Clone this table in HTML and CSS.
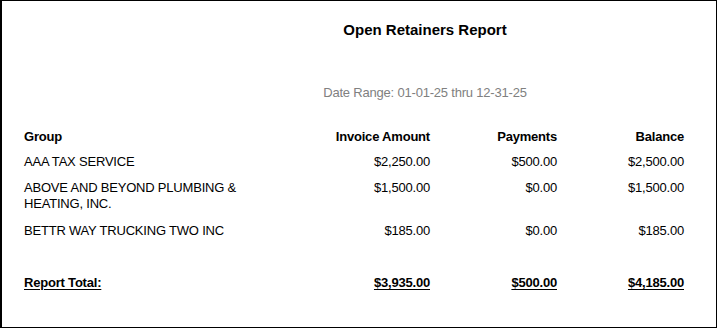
FILE: index.html
```html
<!DOCTYPE html>
<html>
<head>
<meta charset="utf-8">
<link rel="stylesheet" href="styles.css">
</head>
<body>
<div class="frame">
  <div class="head">
    <div class="title">Open Retainers Report</div>
    <div class="range">Date Range: 01-01-25 thru 12-31-25</div>
  </div>
  <div class="report">
    <div class="row hdr">
      <div class="c-group">Group</div>
      <div class="num">Invoice Amount</div>
      <div class="num">Payments</div>
      <div class="num">Balance</div>
    </div>
    <div class="row">
      <div class="c-group">AAA TAX SERVICE</div>
      <div class="num">$2,250.00</div>
      <div class="num">$500.00</div>
      <div class="num">$2,500.00</div>
    </div>
    <div class="row">
      <div class="c-group">ABOVE AND BEYOND PLUMBING &amp; HEATING, INC.</div>
      <div class="num">$1,500.00</div>
      <div class="num">$0.00</div>
      <div class="num">$1,500.00</div>
    </div>
    <div class="row after-wrap">
      <div class="c-group">BETTR WAY TRUCKING TWO INC</div>
      <div class="num">$185.00</div>
      <div class="num">$0.00</div>
      <div class="num">$185.00</div>
    </div>
    <div class="row total">
      <div class="c-group"><span class="u">Report Total:</span></div>
      <div class="num"><span class="u">$3,935.00</span></div>
      <div class="num"><span class="u">$500.00</span></div>
      <div class="num"><span class="u">$4,185.00</span></div>
    </div>
  </div>
</div>
</body>
</html>
```
FILE: styles.css
```css
html, body {
  margin: 0;
  padding: 0;
  background: #fff;
}
body {
  font-family: "Liberation Sans", Arial, sans-serif;
  color: #000;
}
.frame {
  width: 717px;
  height: 328px;
  box-sizing: border-box;
  border: 1px solid #000;
  border-left-width: 2px;
  padding-top: 20px;
}
.head {
  padding-left: 132px;
  text-align: center;
}
.title {
  font-weight: bold;
  font-size: 15px;
  line-height: 18px;
}
.range {
  margin-top: 46px;
  font-size: 13px;
  letter-spacing: -0.2px;
  line-height: 16px;
  color: #808080;
}
.report {
  margin-top: 28px;
  padding-left: 22px;
  display: flex;
  flex-direction: column;
  gap: 10px;
  font-size: 13px;
  letter-spacing: -0.2px;
  line-height: 16px;
}
.row {
  display: grid;
  grid-template-columns: 240px 166px 127px 127px;
}
.hdr {
  font-weight: bold;
  margin-bottom: -1px;
}
.after-wrap {
  margin-top: 1px;
}
.num {
  text-align: right;
}
.total {
  margin-top: 26px;
  font-weight: bold;
}
.u {
  text-decoration: underline;
  text-underline-offset: 2px;
}
```
